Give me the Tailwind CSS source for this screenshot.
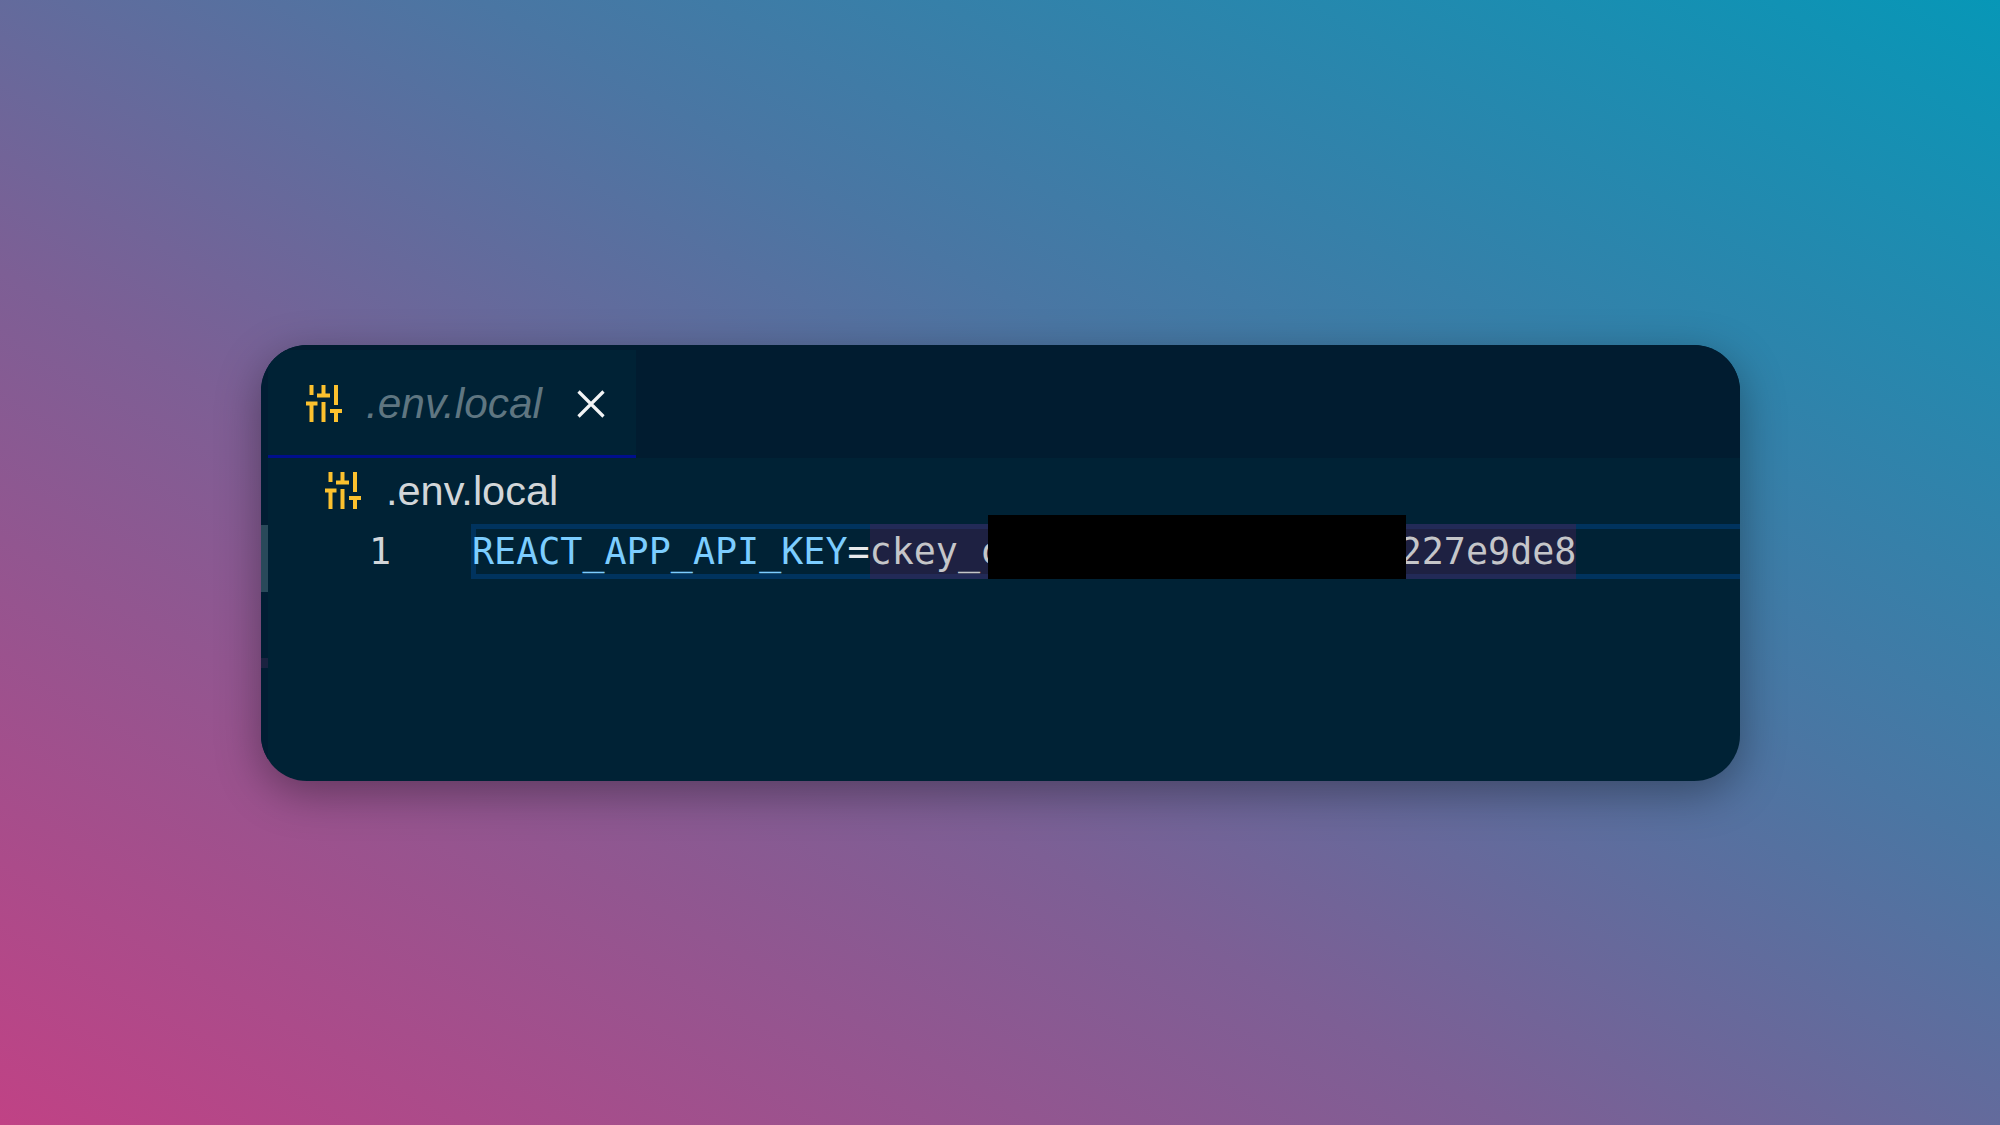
<!DOCTYPE html>
<html>
  <head>
    <meta charset="UTF-8" />
    <title>.env.local</title>
    <script src="https://cdn.jsdelivr.net/npm/@tailwindcss/browser@4"></script>
  </head>
  <body>
    <div class="flex h-[1125px] w-[2000px] items-center justify-center overflow-hidden bg-[linear-gradient(to_top_right,#c04285_0%,#7d5f95_38%,#4a76a3_62%,#0797b7_100%)] pl-[1px]">
      <div class="flex h-[436px] w-[1479px] overflow-hidden rounded-[46px] bg-[#002235] shadow-[0_12px_44px_rgba(0,0,0,0.35)]">
        <div class="flex w-[7px] shrink-0 flex-col bg-[#011d33] pt-[180px]">
          <div class="h-[67px] bg-[#29495a]"></div>
          <div class="mt-[66px] h-[10px] bg-[#1a2240]"></div>
        </div>
        <div class="flex min-w-0 flex-1 flex-col">
          <div class="flex h-[113px] shrink-0 bg-[#011c30]">
            <div class="mt-[5px] flex h-[108px] w-[368px] items-start border-b-[3px] border-[#000f8c] bg-[#002235] pl-[37px] pr-[3px] pt-[30px]">
              <svg class="mt-[5px] h-[38px] w-[38px]" viewBox="0 0 38 38" fill="none" stroke="#fcc12e" stroke-width="4">
                <path d="M6.500 0v10M1 18.500h11.500M6.500 18.500v18.500M18.500 0v10M12 10.500h13M18.500 17v20M31 0v20M25 26h12M31 26v11" />
              </svg>
              <span class="ml-[23px] mt-[1px] font-['Liberation_Sans',sans-serif] text-[42.400px]/[46px] italic text-[#5f7681]">.env.local</span>
              <svg class="ml-[35px] mt-[10px] h-[28px] w-[28px]" viewBox="0 0 28 28" fill="none" stroke="#f2f4f5" stroke-width="3.200">
                <path d="M1.500 1.500l25 25M26.500 1.500l-25 25" />
              </svg>
            </div>
          </div>
          <div class="flex h-[66px] shrink-0 items-center pl-[56px]">
            <svg class="h-[38px] w-[38px]" viewBox="0 0 38 38" fill="none" stroke="#fcc12e" stroke-width="4">
              <path d="M6.500 0v10M1 18.500h11.500M6.500 18.500v18.500M18.500 0v10M12 10.500h13M18.500 17v20M31 0v20M25 26h12M31 26v11" />
            </svg>
            <span class="ml-[24px] font-['Liberation_Sans',sans-serif] text-[41.500px]/[46px] text-[#d2d6d9]">.env.local</span>
          </div>
          <div class="relative flex h-[55px] shrink-0 font-['DejaVu_Sans_Mono',monospace] text-[36.700px]/[45px]">
            <div class="w-[203px] shrink-0 pr-[80px] pt-[5px] text-right text-[#d2d6d9]">1</div>
            <div class="flex flex-1 border-y-[5px] border-l-[5px] border-[#00335e]">
              <span class="-ml-[4px] text-[#7ccdff]">REACT_APP_API_KEY</span><span class="text-[#e8eaec]">=</span><span class="-my-[5px] whitespace-pre border-y-[5px] border-[#222a57] bg-[#1e2142] text-[#c5c6c9]">ckey_c                  227e9de8</span>
            </div>
            <div class="absolute left-[720px] top-[-9px] h-[64px] w-[418px] bg-black"></div>
          </div>
        </div>
      </div>
    </div>
  </body>
</html>
